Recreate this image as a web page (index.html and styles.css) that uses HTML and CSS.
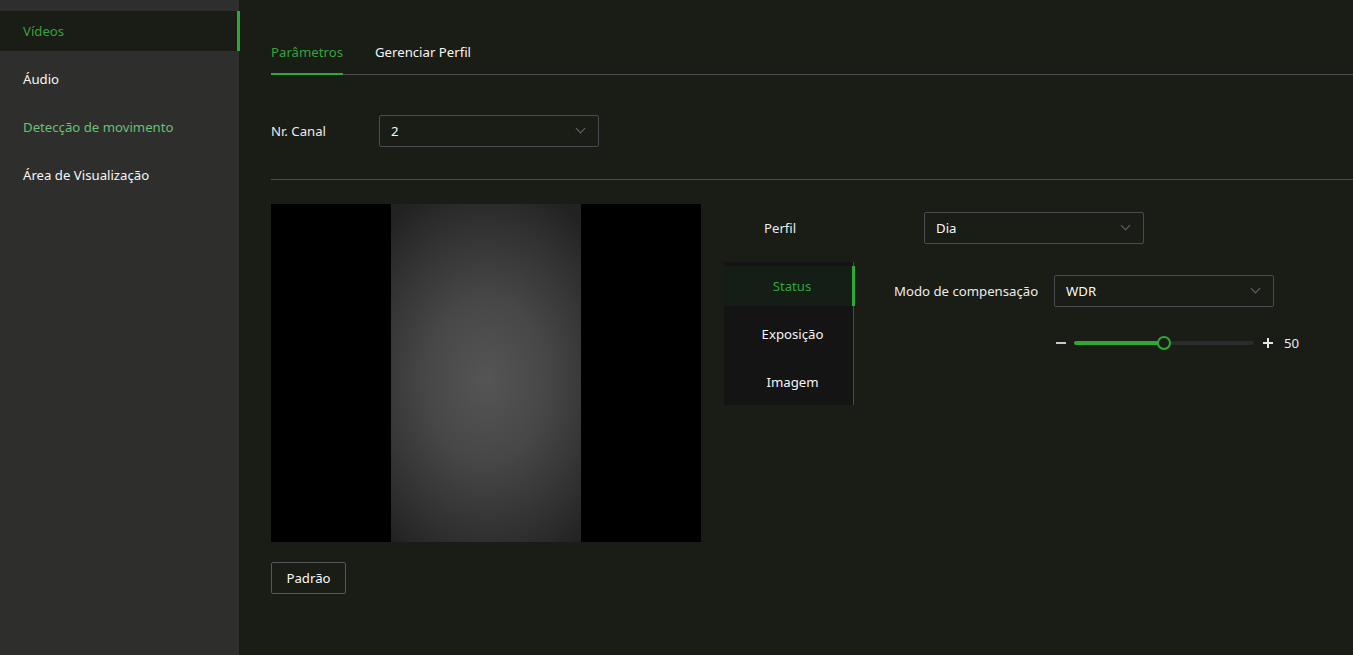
FILE: index.html
```html
<!DOCTYPE html>
<html lang="pt">
<head>
    <meta charset="UTF-8">
    <title>Vídeos</title>
    <link rel="stylesheet" href="styles.css">
</head>
<body>

<aside class="sidebar">
    <a class="side-item active">Vídeos</a>
    <a class="side-item">Áudio</a>
    <a class="side-item hover">Detecção de movimento</a>
    <a class="side-item">Área de Visualização</a>
</aside>

<main class="main">
    <nav class="tabs">
        <a class="tab active">Parâmetros</a>
        <a class="tab">Gerenciar Perfil</a>
    </nav>

    <div class="form-row channel">
        <label class="label">Nr. Canal</label>
        <div class="select">2<span class="arrow"></span></div>
    </div>

    <hr class="divider">

    <section class="config">
        <div class="preview-col">
            <div class="preview">
                <div class="video"></div>
            </div>
            <button class="btn">Padrão</button>
        </div>

        <div class="settings">
            <div class="form-row profile">
                <label class="label">Perfil</label>
                <div class="select">Dia<span class="arrow"></span></div>
            </div>

            <div class="panel">
                <ul class="subtabs">
                    <li class="subtab active">Status</li>
                    <li class="subtab">Exposição</li>
                    <li class="subtab">Imagem</li>
                </ul>

                <div class="panel-body">
                    <div class="form-row mode">
                        <label class="label">Modo de compensação</label>
                        <div class="select">WDR<span class="arrow"></span></div>
                    </div>
                    <div class="slider-row">
                        <span class="minus"></span>
                        <div class="track">
                            <div class="fill" style="width: 50%"></div>
                            <span class="thumb" style="left: 50%"></span>
                        </div>
                        <span class="plus"></span>
                        <span class="value">50</span>
                    </div>
                </div>
            </div>
        </div>
    </section>
</main>

</body>
</html>
```

FILE: styles.css
```css
body {
    margin: 0;
    font-family: "Noto Sans", "Open Sans", sans-serif;
    font-size: 13.2px;
    color: #f0f0f0;
    background: #1a1c16;
    display: flex;
    min-height: 655px;
}
.sidebar {
    width: 239px;
    flex-shrink: 0;
    background: #2e2f2d;
    padding-top: 11px;
    display: flex;
    flex-direction: column;
    gap: 8px;
}
.side-item {
    height: 40px;
    line-height: 40px;
    padding-left: 23px;
    color: #f6f6f6;
}
.side-item.active {
    background: #1a1c16;
    color: #33a33a;
    border-right: 3px solid #2ea836;
    margin-right: -1px;
}
.side-item.hover {
    color: #6cbf74;
}
.main {
    flex: 1;
    padding: 30px 0 0 32px;
}
.tabs {
    display: flex;
    gap: 32px;
    border-bottom: 1px solid #4a4b4e;
}
.tab {
    height: 43px;
    line-height: 44px;
    color: #f6f6f6;
}
.tab.active {
    color: #33a33a;
    border-bottom: 2px solid #2ea836;
    margin-bottom: -1px;
}
.form-row {
    display: flex;
    align-items: center;
}
.label {
    width: 108px;
    color: #ececec;
}
.select {
    position: relative;
    box-sizing: border-box;
    width: 220px;
    height: 32px;
    line-height: 30px;
    padding-left: 11px;
    border: 1px solid #4a4b4e;
    border-radius: 2px;
    color: #f8f8f8;
}
.arrow {
    position: absolute;
    right: 14px;
    top: 9px;
    width: 6px;
    height: 6px;
    border-right: 1px solid #66676a;
    border-bottom: 1px solid #66676a;
    transform: rotate(45deg);
}
.channel {
    margin-top: 40px;
}
.divider {
    border: none;
    border-top: 1px solid #4a4b4e;
    margin: 32px 0 24px;
}
.config {
    display: flex;
    gap: 23px;
}
.preview {
    width: 430px;
    height: 338px;
    background: #000;
    display: flex;
    justify-content: center;
}
.video {
    width: 190px;
    height: 100%;
    background: radial-gradient(ellipse 80% 60% at 50% 52%, #555 0%, #474747 40%, #2c2c2c 85%, #222 100%);
}
.btn {
    margin-top: 20px;
    width: 75px;
    height: 32px;
    background: transparent;
    border: 1px solid #55565a;
    border-radius: 2px;
    color: #f8f8f8;
    font-family: inherit;
    font-size: 13.2px;
}
.settings {
    padding-top: 8px;
}
.profile .label {
    width: 160px;
    padding-left: 40px;
}
.panel {
    display: flex;
    margin-top: 18px;
}
.subtabs {
    list-style: none;
    margin: 0;
    padding: 4px 0 3px;
    width: 129px;
    background: #141414;
    border-right: 1px solid #4a4b4e;
    display: flex;
    flex-direction: column;
    gap: 8px;
}
.subtab {
    height: 40px;
    line-height: 40px;
    text-align: center;
    padding-left: 8px;
    color: #f6f6f6;
}
.subtab.active {
    background: #141d16;
    color: #33a33a;
    border-right: 3px solid #2ea836;
    margin-right: -2px;
}
.panel-body {
    padding: 13px 0 0 40px;
}
.mode .label {
    width: 160px;
}
.slider-row {
    display: flex;
    align-items: center;
    margin: 28px 0 0 162px;
    height: 16px;
}
.minus {
    width: 10px;
    height: 2px;
    background: #c8c8c8;
}
.track {
    position: relative;
    width: 180px;
    height: 4px;
    border-radius: 2px;
    background: #2a2b2b;
    margin-left: 8px;
}
.fill {
    height: 100%;
    border-radius: 2px;
    background: #2ea836;
}
.thumb {
    position: absolute;
    top: -5px;
    width: 10px;
    height: 10px;
    margin-left: -7px;
    border: 2px solid #2ea836;
    border-radius: 50%;
    background: #1a1c16;
}
.plus {
    position: relative;
    width: 10px;
    height: 2px;
    background: #e6e6e6;
    margin-left: 9px;
}
.plus::after {
    content: "";
    position: absolute;
    left: 4px;
    top: -4px;
    width: 2px;
    height: 10px;
    background: #e6e6e6;
}
.value {
    margin-left: 11px;
    color: #ececec;
}
```
